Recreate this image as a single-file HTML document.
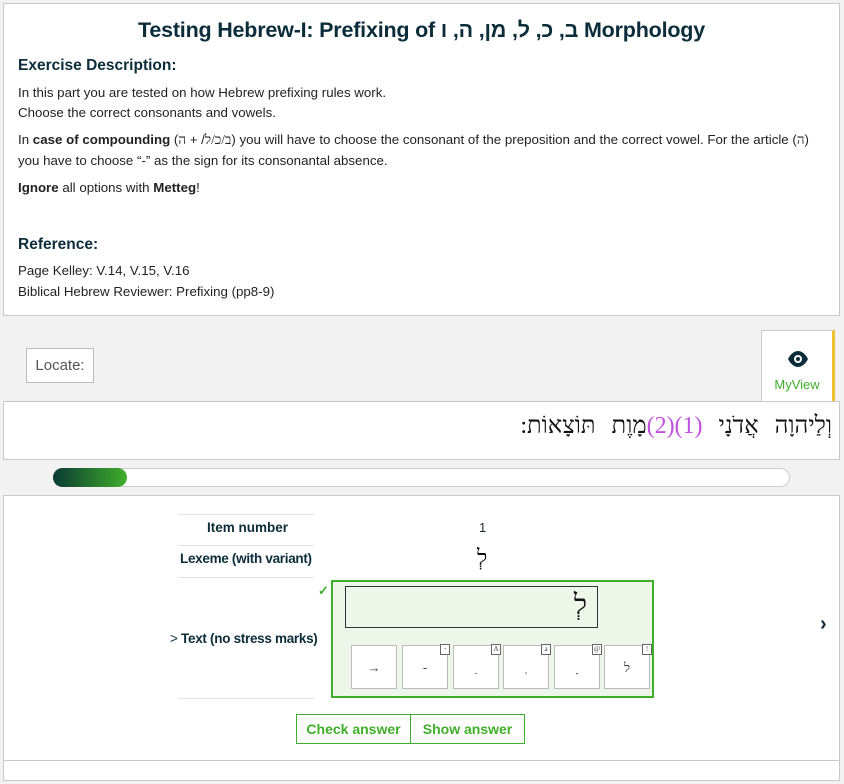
<!DOCTYPE html>
<html><head><meta charset="utf-8"><style>
body{margin:0;width:844px;height:784px;background:#f2f2f2;font-family:"Liberation Sans",sans-serif;color:#1a2b33;position:relative;overflow:hidden}
.abs{position:absolute}
.p1{left:3px;top:3px;width:835px;height:311px;background:#fff;border:1px solid #c8c8c8}
h1{margin:0;position:absolute;top:14px;left:0;width:100%;text-align:center;font-size:21.5px;color:#0b2d3a;font-weight:bold;letter-spacing:-0.2px}
.t{position:absolute;left:14px;font-size:13.3px;color:#222;white-space:nowrap}
.h{position:absolute;left:14px;font-size:15.5px;font-weight:bold;color:#0b2d3a}
.heb{font-family:"Liberation Serif","DejaVu Serif",serif}
.btn{position:absolute;top:714px;height:28px;border:1px solid #3fae2a;background:#fff;color:#3fae2a;font-weight:bold;font-size:14px;line-height:28px;text-align:center}
.key{position:absolute;top:645px;width:44px;height:42px;border:1px solid #bbb;background:#fff;text-align:center;line-height:44px;font-size:13px;color:#444}
.sm{position:absolute;top:-2px;right:-3px;width:8px;height:9px;border:1px solid #666;background:#fff;font-size:7px;line-height:9px}
.row{position:absolute;left:178px;width:136px;border-top:1px solid #e3e3e3}
.lab{position:absolute;font-size:13.5px;font-weight:bold;color:#0b2d3a}
</style></head><body>
<div class="abs p1">
<h1>Testing Hebrew-I: Prefixing of <span dir="rtl">ב, כ, ל, מן, ה, ו</span> Morphology</h1>
<div class="h" style="top:53px">Exercise Description:</div>
<div class="t" style="top:81px">In this part you are tested on how Hebrew prefixing rules work.</div>
<div class="t" style="top:101px">Choose the correct consonants and vowels.</div>
<div class="t" style="top:128px">In <b>case of compounding</b> (<span class="heb">ב/כ/ל</span>/ + <span class="heb">ה</span>) you will have to choose the consonant of the preposition and the correct vowel. For the article (<span class="heb">ה</span>)</div>
<div class="t" style="top:149px">you have to choose “-” as the sign for its consonantal absence.</div>
<div class="t" style="top:176px"><b>Ignore</b> all options with <b>Metteg</b>!</div>
<div class="h" style="top:232px">Reference:</div>
<div class="t" style="top:259px">Page Kelley: V.14, V.15, V.16</div>
<div class="t" style="top:280px">Biblical Hebrew Reviewer: Prefixing (pp8-9)</div>
</div>
<div class="abs" style="left:26px;top:348px;width:66px;height:33px;border:1px solid #bbb;background:#fff;font-size:15px;color:#555;line-height:33px;text-align:center">Locate:</div>
<div class="abs" style="left:761px;top:330px;width:70px;height:72px;background:#fff;border:1px solid #ccc;border-right:3px solid #f0c030;border-bottom:none">
<svg class="abs" style="left:25px;top:20px" width="22" height="16" viewBox="0 0 22 16"><path d="M1 8C4 2 8 0 11 0s7 2 10 8c-3 6-7 8-10 8S4 14 1 8z" fill="#0b2d3a"/><circle cx="11" cy="8" r="4" fill="#fff"/><circle cx="11" cy="8" r="2" fill="#0b2d3a"/></svg>
<div class="abs" style="top:46px;width:70px;text-align:center;font-size:13px;color:#3fae2a">MyView</div>
</div>
<div class="abs" style="left:3px;top:401px;width:835px;height:57px;background:#fff;border:1px solid #c8c8c8"></div>
<div class="abs heb" dir="rtl" style="right:12px;top:413px;font-size:24px;color:#111;white-space:nowrap;word-spacing:10px">וְלַיהוָה אֲדֹנָי <span style="color:#c050e0">(1)(2)</span>מָוֶת תּוֹצָאוֹת:</div>
<div class="abs" style="left:53px;top:468px;width:735px;height:17px;border:1px solid #ccc;border-radius:10px;background:#fff"></div>
<div class="abs" style="left:53px;top:468px;width:74px;height:19px;border-radius:10px;background:linear-gradient(90deg,#0b3a33,#3fae2a)"></div>
<div class="abs" style="left:3px;top:495px;width:835px;height:264px;background:#fff;border:1px solid #c8c8c8"></div>
<div class="abs" style="left:3px;top:760px;width:835px;height:19px;background:#fff;border:1px solid #c8c8c8"></div>
<div class="row" style="top:514px"></div><div class="row" style="top:545px"></div><div class="row" style="top:577px"></div><div class="row" style="top:698px"></div>
<div class="lab" style="left:207px;top:520px">Item number</div>
<div class="lab" style="left:180px;top:551px;letter-spacing:-0.3px">Lexeme (with variant)</div>
<div class="lab" style="left:170px;top:631px;letter-spacing:-0.3px"><span style="font-weight:normal">&gt;</span> Text (no stress marks)</div>
<div class="abs" style="left:479px;top:520px;font-size:13px">1</div>
<div class="abs heb" style="left:477px;top:545px;font-size:22px;color:#111">לְ</div>
<div class="abs" style="left:318px;top:583px;color:#3fae2a;font-size:13px;font-weight:bold">✓</div>
<div class="abs" style="left:331px;top:580px;width:319px;height:114px;border:2px solid #3fae2a;background:#edf6e9"></div>
<div class="abs heb" style="left:345px;top:586px;width:251px;height:40px;border:1px solid #333;background:#edf6e9;text-align:right;font-size:28px;line-height:38px;color:#111"><span style="margin-right:10px">לְ</span></div>
<div class="key" style="left:351px">→</div>
<div class="key" style="left:402px">-<div class="sm">-</div></div>
<div class="key heb" style="left:453px">ַ<div class="sm">A</div></div>
<div class="key heb" style="left:503px">ְ<div class="sm">a</div></div>
<div class="key heb" style="left:554px">ָ<div class="sm">@</div></div>
<div class="key heb" style="left:604px">ל<div class="sm">!</div></div>
<div class="abs" style="left:820px;top:613px;font-size:20px;font-weight:bold;color:#0b2d3a">›</div>
<div class="btn" style="left:296px;width:113px">Check answer</div>
<div class="btn" style="left:410px;width:113px">Show answer</div>
</body></html>
